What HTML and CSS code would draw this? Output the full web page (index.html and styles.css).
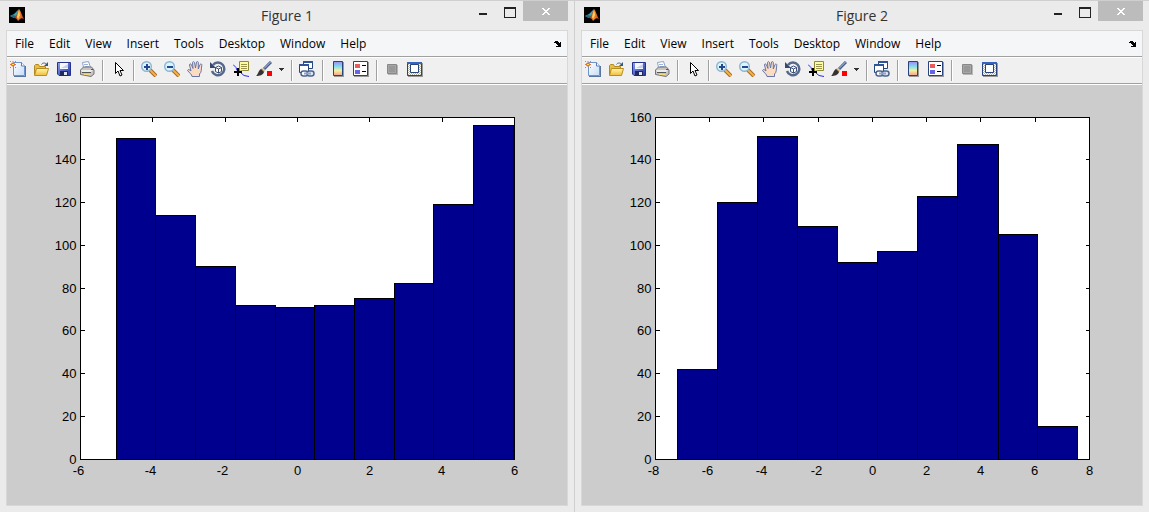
FILE: index.html
```html
<!DOCTYPE html>
<html lang="en">
<head>
  <meta charset="UTF-8">
  <meta name="viewport" content="width=device-width, initial-scale=1.0">
  <title>Figures</title>
  <link rel="stylesheet" href="styles.css">
</head>
<body>
  <!-- Shared icons -->
  <svg class="sprite" aria-hidden="true">
    <defs>
      <linearGradient id="g-page" x1="0" y1="0" x2="1" y2="1">
        <stop offset="0" stop-color="#ffffff"/><stop offset="1" stop-color="#c5dcf8"/>
      </linearGradient>
      <linearGradient id="g-folder" x1="0" y1="0" x2="0" y2="1">
        <stop offset="0" stop-color="#fff6b0"/><stop offset="1" stop-color="#f0bd35"/>
      </linearGradient>
      <linearGradient id="g-disk" x1="0" y1="0" x2="1" y2="1">
        <stop offset="0" stop-color="#8ea2ee"/><stop offset="1" stop-color="#2434a0"/>
      </linearGradient>
      <linearGradient id="g-bar" x1="0" y1="0" x2="0" y2="1">
        <stop offset="0" stop-color="#9a8cf0"/><stop offset=".35" stop-color="#84dcf0"/>
        <stop offset=".65" stop-color="#f4f0a0"/><stop offset="1" stop-color="#f4a090"/>
      </linearGradient>
      <linearGradient id="g-logo" x1="0" y1="0" x2="1" y2="0">
        <stop offset="0" stop-color="#8a2410"/><stop offset=".5" stop-color="#f08a2c"/><stop offset="1" stop-color="#c8401a"/>
      </linearGradient>
      <pattern id="p-check" width="2" height="2" patternUnits="userSpaceOnUse">
        <path fill="#fff" d="M0 0h2v2H0z"/><path fill="#b4b4a4" d="M0 0h1v1H0zM1 1h1v1H1z"/>
      </pattern>
    </defs>
    <symbol id="i-logo" viewBox="0 0 16 16">
      <path fill="#000" d="M0 0h16v16H0z"/>
      <path fill="#3f9fb4" d="M1 9l4-2 3-3 2-2-2 6-3 3z"/>
      <path fill="#2a6480" d="M1 9l4 2 2-2-3-1z"/>
      <path fill="url(#g-logo)" d="M5 11l2-2 3-7c2 2 3 7 5 10-2-1-3-1-4 0l-2 2c-1-2-2-3-4-3z"/>
      <path fill="#ffd060" d="M10 3l1 5-2 4-1-2z"/>
    </symbol>
    <symbol id="i-new" viewBox="0 0 16 16">
      <path fill="#56759f" d="M4 15h12v1H4zM15 5h1v11h-1z"/>
      <path fill="url(#g-page)" stroke="#6d94cc" d="M3.500 1.500h8l3 3.500v9.500h-11z"/>
      <path fill="#fff" stroke="#5b7fb4" d="M11.500 1.500v3.500h3"/>
      <path stroke="#e0784a" d="M0 .500h1M3 0v1M5 .500h1M0 3.500h6M3 1v5M0 6.500h1M5 6.500h1"/>
      <path fill="#ffe050" stroke="#ec6c30" d="M1.500 2.500h3v2h-3z"/>
    </symbol>
    <symbol id="i-open" viewBox="0 0 16 16">
      <path fill="#e7bf45" stroke="#b28a20" d="M1.500 13.500v-9l1-1h3l1 2h6v8z"/>
      <path fill="url(#g-folder)" stroke="#b88d20" d="M1.500 14.500l2-7h12l-2 7z"/>
      <path fill="none" stroke="#49688f" d="M8.500 3.500c1-2 4-2 5 0"/>
      <path fill="#34557c" d="M15 1v4h-4z"/>
    </symbol>
    <symbol id="i-save" viewBox="0 0 16 16">
      <path fill="url(#g-disk)" stroke="#25338f" d="M1.500 1.500h13v13H3l-1.500-1.500z"/>
      <path fill="#f6f8ff" d="M4 2h8v6H4z"/>
      <path fill="#c6d0ee" d="M5 7h7V3z"/>
      <path fill="#20285c" d="M4 10h8v5H4z"/>
      <path fill="#e0e4f2" d="M8 11h3v3H8z"/>
    </symbol>
    <symbol id="i-print" viewBox="0 0 16 16">
      <path fill="#fff" stroke="#8ba3cc" d="M4.500 6.500l-1-5 6-1 2 6"/>
      <path stroke="#9ab4e0" d="M5 3.500h4M6 5.500h4"/>
      <path fill="#c5c5c5" stroke="#737373" d="M1.500 9l3-3h8l2.500 3v4l-3 2.500-10.500-2z"/>
      <path fill="#ececec" d="M2 9h12l-2 2H3z"/>
      <path fill="#555" d="M3 11h9v1H3zM12 8h2v1h-2z"/>
      <path fill="#f4dd80" d="M5 13h6v1H5z"/>
    </symbol>
    <symbol id="i-arrow" viewBox="0 0 16 16">
      <path fill="#fff" stroke="#000" d="M5.500 1.500v11l2.500-2.500 2 5 2-1-2-4.500h3.500z"/>
    </symbol>
    <symbol id="i-lens" viewBox="0 0 16 16">
      <path stroke="#a76c26" stroke-width="4" d="M9 9l6 6"/>
      <path stroke="#f5b04c" stroke-width="2" d="M9 9l6 6"/>
      <circle cx="5.500" cy="5.500" r="4.800" fill="#d8f5fc" stroke="#8db4d2" stroke-width="1.400"/>
    </symbol>
    <symbol id="i-zoomin" viewBox="0 0 16 16">
      <use href="#i-lens"/>
      <path fill="#26468e" d="M3 5h6v2H3zM5 3h2v6H5z"/>
    </symbol>
    <symbol id="i-zoomout" viewBox="0 0 16 16">
      <use href="#i-lens"/>
      <path fill="#26468e" d="M3 5h6v2H3z"/>
    </symbol>
    <symbol id="i-hand" viewBox="0 0 16 16">
      <path fill="#fbdcc0" stroke="#6675a8" d="M5 15.500c0-2-3-4-4.500-6 .500-1.500 2-1 3.500.500L2.500 4c0-1.500 1.500-1.500 2 0L6 7.500l-.500-6c.500-1.200 1.500-1 2 0L8.500 7l1-6c.800-1 1.800-.500 1.800.500L11.300 8 13 3.500c1-1 2-.500 1.800.800C14 8 15 11 12.500 13v2.500z"/>
    </symbol>
    <symbol id="i-rotate" viewBox="0 0 16 16">
      <path fill="none" stroke="#56698c" stroke-width="2.500" d="M3 4a6.300 6.300 0 1 1-1 6"/>
      <path fill="#35496e" d="M0 1v6h6z"/>
      <path fill="#fff" stroke="#3c507a" d="M5.500 6.500l3-1.500 3 1.500v4l-3 1.500-3-1.500zM5.500 6.500l3 1.500 3-1.500M8.500 8v4"/>
    </symbol>
    <symbol id="i-datatip" viewBox="0 0 16 16">
      <path fill="none" stroke="#2a2af0" d="M0 3.500l3 3 1 3M8 12l3 2.500 5 1"/>
      <path fill="#fffca0" stroke="#8f8a32" d="M6.500.500h9v9h-6l-3 1z"/>
      <path stroke="#99954c" d="M8 3.500h6M8 5.500h6M8 7.500h6"/>
      <path fill="#000" d="M4 7h2v3h3v2H6v3H4v-3H1v-2h3z"/>
    </symbol>
    <symbol id="i-brush" viewBox="0 0 16 16">
      <path stroke="#465d8b" stroke-width="3" d="M15 1L8 8"/>
      <path stroke="#b8c8e4" d="M14.500 1L8 7.500"/>
      <path fill="#cfa86c" d="M6 7l3 3-2 2-3-3z"/>
      <path fill="#333" d="M5 8l3 3c-1 3-4 4-8 4 2-1 2-5 5-7z"/>
      <path fill="#f00" d="M11 10h5v5h-5z"/>
    </symbol>
    <symbol id="i-down" viewBox="0 0 5 3">
      <path fill="#333" d="M0 0h5v1H4v1H3v1H2V2H1V1H0z"/>
    </symbol>
    <symbol id="i-link" viewBox="0 0 16 16">
      <path fill="#fff" stroke="#27447c" d="M4.500.500h9v7h-9z"/>
      <path fill="#2f5597" d="M4 0h10v2H4z"/>
      <path fill="#fff" stroke="#27447c" d="M.500 3.500h9v8h-9z"/>
      <path fill="#2f5597" d="M0 3h10v2H0z"/>
      <rect x="2" y="10" width="7" height="5" rx="2.500" fill="#fff" stroke="#4e648c" stroke-width="1.500"/>
      <rect x="8" y="10" width="7" height="5" rx="2.500" fill="#dfe8f6" stroke="#4e648c" stroke-width="1.500"/>
      <path stroke="#8ea4c8" stroke-width="2" d="M5 12.500h7"/>
    </symbol>
    <symbol id="i-colorbar" viewBox="0 0 16 16">
      <path fill="#9a9a9a" d="M4 1h10v15H4z"/>
      <path fill="url(#g-bar)" stroke="#27447c" d="M3.500.500h9v14h-9z"/>
    </symbol>
    <symbol id="i-legend" viewBox="0 0 16 16">
      <path fill="#9a9a9a" d="M1 1h15v15H1z"/>
      <path fill="#fff" stroke="#27447c" d="M.500.500h14v14H.500z"/>
      <path fill="#e85c5c" d="M2 3h5v4H2z"/>
      <path fill="#6464e4" d="M2 9h5v4H2z"/>
      <path fill="#000" d="M9 4h4v1H9zM9 10h4v1H9z"/>
    </symbol>
    <symbol id="i-hide" viewBox="0 0 16 16">
      <path fill="#b8b8b8" d="M4 4h10v10H4z"/>
      <path fill="#a6a6a6" stroke="#888" d="M3.500 3.500h9v9h-9z"/>
      <path fill="#989898" d="M5 5h6v6H5z"/>
    </symbol>
    <symbol id="i-show" viewBox="0 0 16 16">
      <path fill="#9a9a9a" d="M1 2h15v14H1z"/>
      <path fill="url(#p-check)" stroke="#27447c" d="M.500 1.500h14v13H.500z"/>
      <path fill="#3565c0" d="M0 1h15v2H0z"/>
      <path fill="#fff" stroke="#27447c" d="M3.500 3.500h8v8h-8z"/>
    </symbol>
    <symbol id="i-dock" viewBox="0 0 8 6">
      <path fill="#000" d="M0 1h1V0h3v1h1v1h1V1h1v5H2V5h2V4H3V3H2V2H0z"/>
    </symbol>
    <symbol id="i-close" viewBox="0 0 8 7">
      <path fill="#fff" d="M0 0h2v1h1v1h2V1h1V0h2v1H7v1H6v1H5v1h1v1h1v1h1v1H6V6H5V5H3v1H2v1H0V6h1V5h1V4h1V3H2V2H1V1H0z"/>
    </symbol>
  </svg>

  <main class="desktop">
    <section class="window">
      <header class="titlebar">
        <svg class="logo"><use href="#i-logo"/></svg>
        <h1 class="title">Figure 1</h1>
        <div class="controls">
          <button class="control minimize" aria-label="Minimize"></button>
          <button class="control maximize" aria-label="Maximize"></button>
          <button class="control close" aria-label="Close"><svg class="close-icon"><use href="#i-close"/></svg></button>
        </div>
      </header>
      <div class="client">
        <nav class="menubar">
          <button class="menu">File</button>
          <button class="menu">Edit</button>
          <button class="menu">View</button>
          <button class="menu">Insert</button>
          <button class="menu">Tools</button>
          <button class="menu">Desktop</button>
          <button class="menu">Window</button>
          <button class="menu">Help</button>
          <button class="dock" aria-label="Dock Figure"><svg class="dock-icon"><use href="#i-dock"/></svg></button>
        </nav>
        <div class="toolbar">
          <button class="tool" aria-label="New Figure"><svg class="icon"><use href="#i-new"/></svg></button>
          <button class="tool" aria-label="Open File"><svg class="icon"><use href="#i-open"/></svg></button>
          <button class="tool" aria-label="Save Figure"><svg class="icon"><use href="#i-save"/></svg></button>
          <button class="tool" aria-label="Print Figure"><svg class="icon"><use href="#i-print"/></svg></button>
          <span class="separator"></span>
          <button class="tool" aria-label="Edit Plot"><svg class="icon"><use href="#i-arrow"/></svg></button>
          <span class="separator"></span>
          <button class="tool" aria-label="Zoom In"><svg class="icon"><use href="#i-zoomin"/></svg></button>
          <button class="tool" aria-label="Zoom Out"><svg class="icon"><use href="#i-zoomout"/></svg></button>
          <button class="tool" aria-label="Pan"><svg class="icon"><use href="#i-hand"/></svg></button>
          <button class="tool" aria-label="Rotate 3D"><svg class="icon"><use href="#i-rotate"/></svg></button>
          <button class="tool" aria-label="Data Cursor"><svg class="icon"><use href="#i-datatip"/></svg></button>
          <button class="tool" aria-label="Brush Data"><svg class="icon"><use href="#i-brush"/></svg></button>
          <button class="tool-more" aria-label="Brush Options"><svg class="down-icon"><use href="#i-down"/></svg></button>
          <span class="separator"></span>
          <button class="tool" aria-label="Link Plot"><svg class="icon"><use href="#i-link"/></svg></button>
          <span class="separator"></span>
          <button class="tool" aria-label="Insert Colorbar"><svg class="icon"><use href="#i-colorbar"/></svg></button>
          <button class="tool" aria-label="Insert Legend"><svg class="icon"><use href="#i-legend"/></svg></button>
          <span class="separator"></span>
          <button class="tool" aria-label="Hide Plot Tools" disabled><svg class="icon"><use href="#i-hide"/></svg></button>
          <button class="tool" aria-label="Show Plot Tools"><svg class="icon"><use href="#i-show"/></svg></button>
        </div>
        <svg class="chart" viewBox="-0.5 -0.5 560 420">
          <rect class="axes" x="73" y="32" width="434" height="342"/>
          <!-- Ticks: y left, y right, x top -->
          <path class="line" d="M73 74h4M73 117h4M73 160h4M73 203h4M73 245h4M73 288h4M73 331h4"/>
          <path class="line" d="M507 74h-4M507 117h-4M507 160h-4M507 203h-4M507 245h-4M507 288h-4M507 331h-4"/>
          <path class="line" d="M145 32v4M218 32v4M290 32v4M362 32v4M435 32v4"/>
          <g class="bars">
            <rect x="109" y="53" width="39" height="321"/>
            <rect x="148" y="130" width="40" height="244"/>
            <rect x="188" y="181" width="40" height="193"/>
            <rect x="228" y="220" width="40" height="154"/>
            <rect x="268" y="222" width="39" height="152"/>
            <rect x="307" y="220" width="40" height="154"/>
            <rect x="347" y="213" width="40" height="161"/>
            <rect x="387" y="198" width="39" height="176"/>
            <rect x="426" y="119" width="40" height="255"/>
            <rect x="466" y="40" width="40" height="334"/>
          </g>
          <g class="y-labels">
            <text x="69" y="36">160</text>
            <text x="69" y="78">140</text>
            <text x="69" y="121">120</text>
            <text x="69" y="164">100</text>
            <text x="69" y="207">80</text>
            <text x="69" y="249">60</text>
            <text x="69" y="292">40</text>
            <text x="69" y="335">20</text>
            <text x="69" y="378">0</text>
          </g>
          <g class="x-labels">
            <text x="71" y="389">-6</text>
            <text x="143" y="389">-4</text>
            <text x="215" y="389">-2</text>
            <text x="290" y="389">0</text>
            <text x="362" y="389">2</text>
            <text x="434" y="389">4</text>
            <text x="507" y="389">6</text>
          </g>
        </svg>
      </div>
    </section>

    <section class="window">
      <header class="titlebar">
        <svg class="logo"><use href="#i-logo"/></svg>
        <h1 class="title">Figure 2</h1>
        <div class="controls">
          <button class="control minimize" aria-label="Minimize"></button>
          <button class="control maximize" aria-label="Maximize"></button>
          <button class="control close" aria-label="Close"><svg class="close-icon"><use href="#i-close"/></svg></button>
        </div>
      </header>
      <div class="client">
        <nav class="menubar">
          <button class="menu">File</button>
          <button class="menu">Edit</button>
          <button class="menu">View</button>
          <button class="menu">Insert</button>
          <button class="menu">Tools</button>
          <button class="menu">Desktop</button>
          <button class="menu">Window</button>
          <button class="menu">Help</button>
          <button class="dock" aria-label="Dock Figure"><svg class="dock-icon"><use href="#i-dock"/></svg></button>
        </nav>
        <div class="toolbar">
          <button class="tool" aria-label="New Figure"><svg class="icon"><use href="#i-new"/></svg></button>
          <button class="tool" aria-label="Open File"><svg class="icon"><use href="#i-open"/></svg></button>
          <button class="tool" aria-label="Save Figure"><svg class="icon"><use href="#i-save"/></svg></button>
          <button class="tool" aria-label="Print Figure"><svg class="icon"><use href="#i-print"/></svg></button>
          <span class="separator"></span>
          <button class="tool" aria-label="Edit Plot"><svg class="icon"><use href="#i-arrow"/></svg></button>
          <span class="separator"></span>
          <button class="tool" aria-label="Zoom In"><svg class="icon"><use href="#i-zoomin"/></svg></button>
          <button class="tool" aria-label="Zoom Out"><svg class="icon"><use href="#i-zoomout"/></svg></button>
          <button class="tool" aria-label="Pan"><svg class="icon"><use href="#i-hand"/></svg></button>
          <button class="tool" aria-label="Rotate 3D"><svg class="icon"><use href="#i-rotate"/></svg></button>
          <button class="tool" aria-label="Data Cursor"><svg class="icon"><use href="#i-datatip"/></svg></button>
          <button class="tool" aria-label="Brush Data"><svg class="icon"><use href="#i-brush"/></svg></button>
          <button class="tool-more" aria-label="Brush Options"><svg class="down-icon"><use href="#i-down"/></svg></button>
          <span class="separator"></span>
          <button class="tool" aria-label="Link Plot"><svg class="icon"><use href="#i-link"/></svg></button>
          <span class="separator"></span>
          <button class="tool" aria-label="Insert Colorbar"><svg class="icon"><use href="#i-colorbar"/></svg></button>
          <button class="tool" aria-label="Insert Legend"><svg class="icon"><use href="#i-legend"/></svg></button>
          <span class="separator"></span>
          <button class="tool" aria-label="Hide Plot Tools" disabled><svg class="icon"><use href="#i-hide"/></svg></button>
          <button class="tool" aria-label="Show Plot Tools"><svg class="icon"><use href="#i-show"/></svg></button>
        </div>
        <svg class="chart" viewBox="-0.5 -0.5 560 420">
          <rect class="axes" x="73" y="32" width="434" height="342"/>
          <!-- Ticks: y left, y right, x top -->
          <path class="line" d="M73 74h4M73 117h4M73 160h4M73 203h4M73 245h4M73 288h4M73 331h4"/>
          <path class="line" d="M507 74h-4M507 117h-4M507 160h-4M507 203h-4M507 245h-4M507 288h-4M507 331h-4"/>
          <path class="line" d="M127 32v4M181 32v4M236 32v4M290 32v4M344 32v4M398 32v4M453 32v4"/>
          <g class="bars">
            <rect x="95" y="284" width="40" height="90"/>
            <rect x="135" y="117" width="40" height="257"/>
            <rect x="175" y="51" width="40" height="323"/>
            <rect x="215" y="141" width="40" height="233"/>
            <rect x="255" y="177" width="40" height="197"/>
            <rect x="295" y="166" width="40" height="208"/>
            <rect x="335" y="111" width="40" height="263"/>
            <rect x="375" y="59" width="41" height="315"/>
            <rect x="416" y="149" width="39" height="225"/>
            <rect x="455" y="341" width="40" height="33"/>
          </g>
          <g class="y-labels">
            <text x="69" y="36">160</text>
            <text x="69" y="78">140</text>
            <text x="69" y="121">120</text>
            <text x="69" y="164">100</text>
            <text x="69" y="207">80</text>
            <text x="69" y="249">60</text>
            <text x="69" y="292">40</text>
            <text x="69" y="335">20</text>
            <text x="69" y="378">0</text>
          </g>
          <g class="x-labels">
            <text x="71" y="389">-8</text>
            <text x="125" y="389">-6</text>
            <text x="179" y="389">-4</text>
            <text x="234" y="389">-2</text>
            <text x="290" y="389">0</text>
            <text x="344" y="389">2</text>
            <text x="398" y="389">4</text>
            <text x="452" y="389">6</text>
            <text x="507" y="389">8</text>
          </g>
        </svg>
      </div>
    </section>
  </main>
</body>
</html>
```
FILE: styles.css
```css
* {
  margin: 0;
  padding: 0;
  box-sizing: border-box;
}
body {
  font-family: "Open Sans", "Noto Sans", sans-serif;
  font-size: 12px;
  color: #000;
  background: #ebebeb;
}
button {
  font: inherit;
  color: inherit;
  background: none;
  border: none;
}
svg {
  display: block;
}
.sprite {
  position: absolute;
  width: 0;
  height: 0;
}

/* Windows */
.desktop {
  display: grid;
  grid-template-columns: 1fr 1fr;
  gap: 1px;
  background: #cfcfcf;
}
.window {
  min-width: 0;
  padding: 0 6px 6px;
  background: #ebebeb;
  border-top: 1px solid #cfcfcf;
}
.titlebar {
  display: grid;
  grid-template-columns: 99px 1fr 99px;
  height: 29px;
}
.logo {
  width: 16px;
  height: 16px;
  margin: 6px 3px;
}
.title {
  font-size: 14px;
  font-weight: 400;
  line-height: 29px;
  text-align: center;
  color: #333;
}
.controls {
  display: flex;
}
.control {
  display: flex;
  justify-content: center;
  width: 27px;
  height: 20px;
}
.minimize::before {
  content: "";
  width: 8px;
  height: 2px;
  margin-top: 12px;
  background: #222;
}
.maximize::before {
  content: "";
  width: 10px;
  height: 8px;
  margin-top: 6px;
  border: 1px solid #222;
  border-top-width: 2px;
}
.close {
  width: 45px;
  align-items: center;
  background: #bcbcbc;
}
.close-icon {
  width: 8px;
  height: 7px;
}
.client {
  border: 1px solid #d8d8d8;
}

/* Menu bar */
.menubar {
  display: flex;
  align-items: center;
  gap: 15px;
  height: 26px;
  padding: 0 5px 0 8px;
  background: #f5f6f7;
  border-bottom: 1px solid #a0a0a0;
}
.menu {
  line-height: 16px;
}
.dock {
  margin-left: auto;
}
.dock-icon {
  width: 8px;
  height: 6px;
}

/* Toolbar */
.toolbar {
  display: flex;
  align-items: flex-start;
  height: 28px;
  background: #f0f0f0;
  border-top: 1px solid #fff;
  border-bottom: 1px solid #fff;
  box-shadow: inset 0 -1px #a0a0a0;
}
.tool {
  width: 23px;
  padding: 3px 4px 3px 3px;
}
.icon {
  width: 16px;
  height: 16px;
}
.tool-more {
  width: 12px;
  padding: 10px 4px 10px 3px;
}
.down-icon {
  width: 5px;
  height: 3px;
}
.separator {
  width: 2px;
  height: 21px;
  margin: 2px 3px;
  background: #a0a0a0;
  border-right: 1px solid #fff;
}

/* Histogram */
.chart {
  width: 100%;
  background: #ccc;
  shape-rendering: crispEdges;
  font-family: "Liberation Sans", Arial, sans-serif;
  font-size: 13px;
}
.axes {
  fill: #fff;
  stroke: #000;
}
.line {
  stroke: #000;
}
.bars {
  fill: #00008f;
  stroke: #000;
}
.y-labels {
  text-anchor: end;
}
.x-labels {
  text-anchor: middle;
}
```
